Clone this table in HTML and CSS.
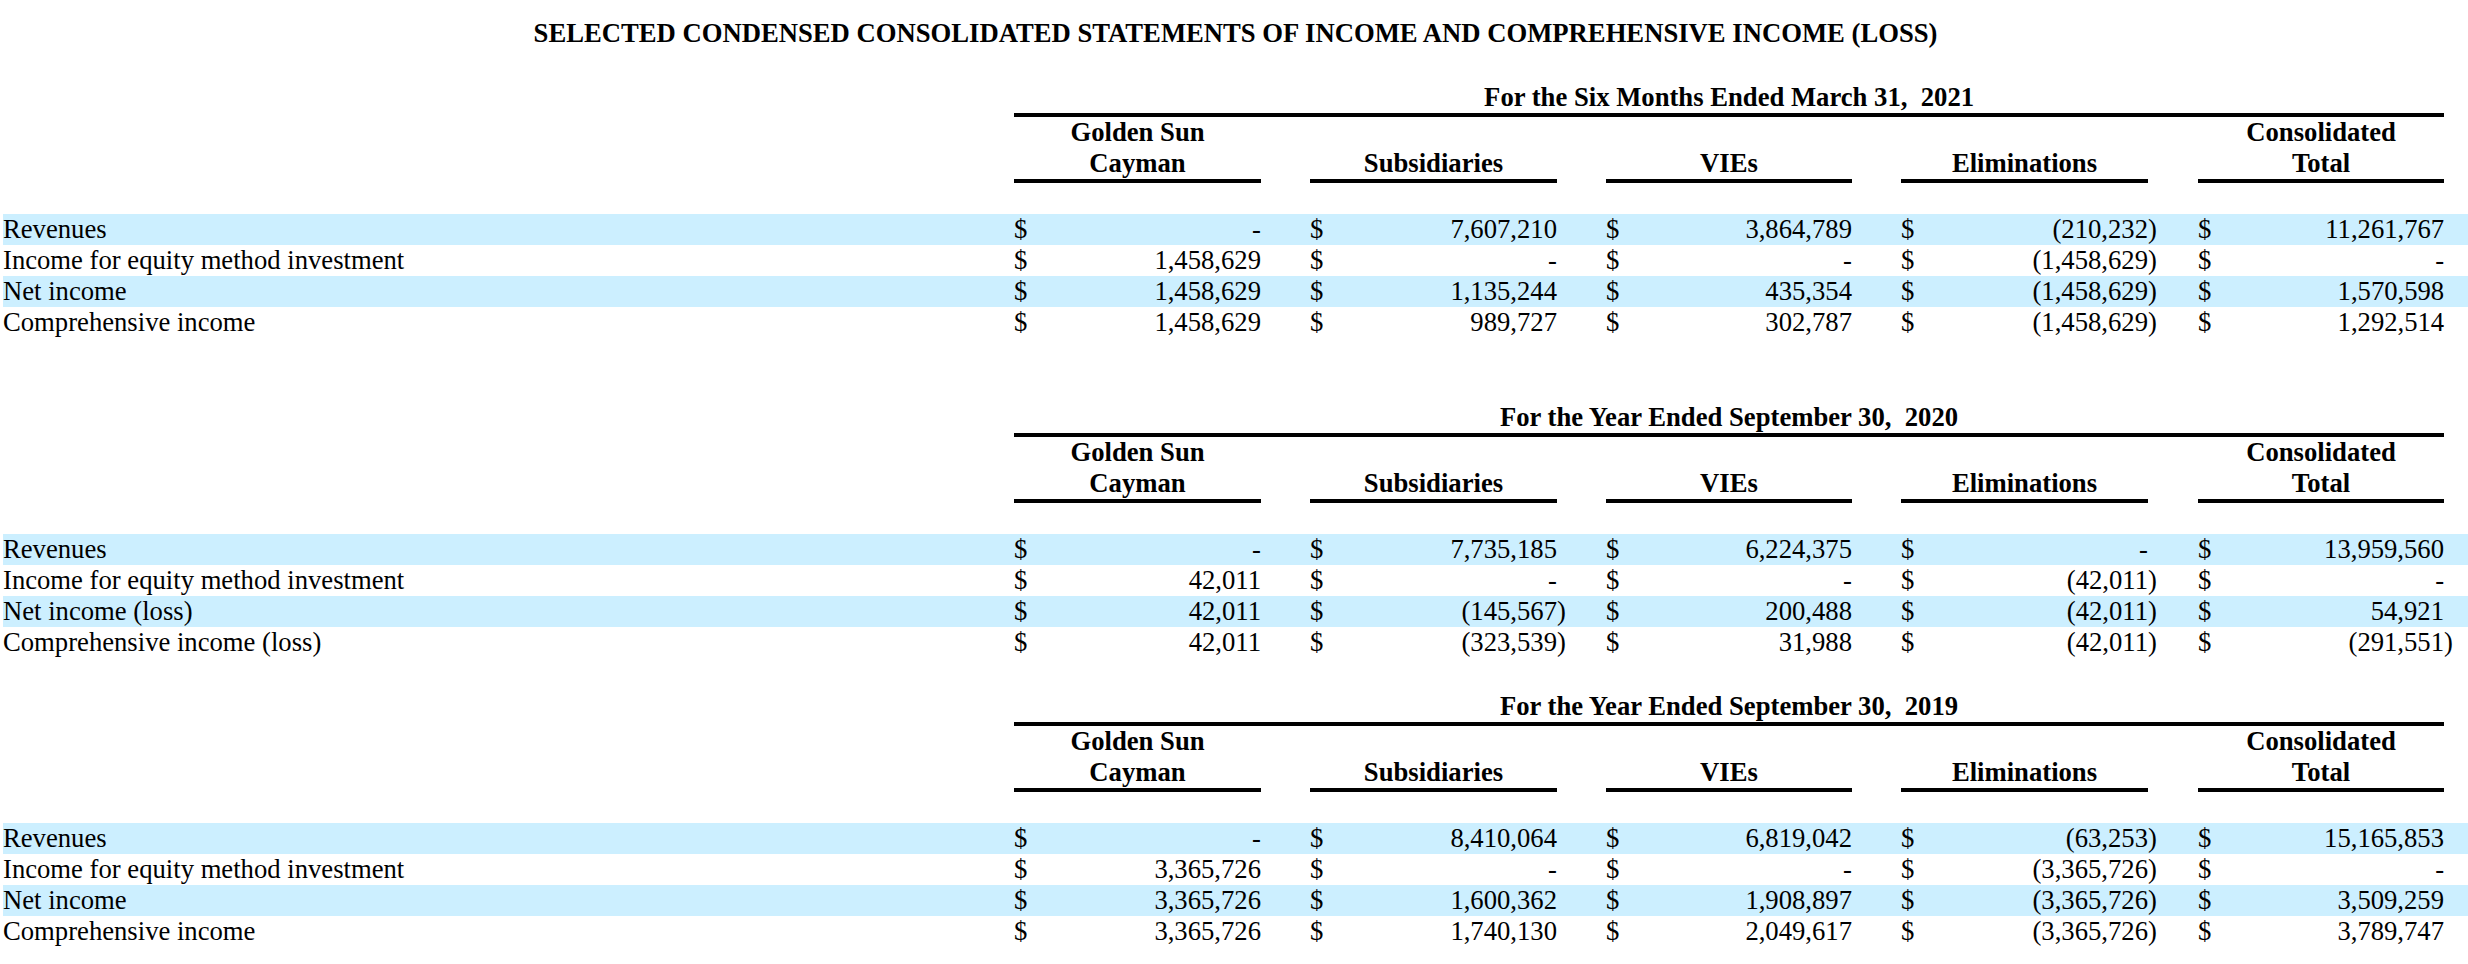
FILE: index.html
```html
<!DOCTYPE html>
<html>
<head>
<meta charset="utf-8">
<title>Selected Condensed Consolidated Statements</title>
<link rel="stylesheet" href="styles.css">
</head>
<body>
<div class="sheet">
  <div class="title">SELECTED CONDENSED CONSOLIDATED STATEMENTS OF INCOME AND COMPREHENSIVE INCOME (LOSS)</div>

  <table class="stmt first">
    <colgroup>
      <col class="c-lbl"><col class="c-cur"><col class="c-val"><col class="c-gap">
      <col class="c-cur"><col class="c-val"><col class="c-gap">
      <col class="c-cur"><col class="c-val3"><col class="c-gap">
      <col class="c-cur"><col class="c-val"><col class="c-gap4">
      <col class="c-cur"><col class="c-val3"><col class="c-tail">
    </colgroup>
    <tr class="period-row"><td></td><td class="period" colspan="14">For the Six Months Ended March 31,&nbsp; 2021</td><td></td></tr>
    <tr class="head-row"><td></td><td class="colhead" colspan="2">Golden Sun<br>Cayman</td><td></td><td class="colhead" colspan="2">Subsidiaries</td><td></td><td class="colhead" colspan="2">VIEs</td><td></td><td class="colhead" colspan="2">Eliminations</td><td></td><td class="colhead" colspan="2">Consolidated<br>Total</td><td></td></tr>
    <tr class="blank"><td colspan="16"></td></tr>
    <tr class="band"><td class="lbl">Revenues</td><td class="cur">$</td><td class="num">-</td><td class="gap"></td><td class="cur">$</td><td class="num">7,607,210</td><td class="gap"></td><td class="cur">$</td><td class="num">3,864,789</td><td class="gap"></td><td class="cur">$</td><td class="num">(210,232</td><td class="gap">)</td><td class="cur">$</td><td class="num">11,261,767</td><td class="gap"></td></tr>
    <tr><td class="lbl">Income for equity method investment</td><td class="cur">$</td><td class="num">1,458,629</td><td class="gap"></td><td class="cur">$</td><td class="num">-</td><td class="gap"></td><td class="cur">$</td><td class="num">-</td><td class="gap"></td><td class="cur">$</td><td class="num">(1,458,629</td><td class="gap">)</td><td class="cur">$</td><td class="num">-</td><td class="gap"></td></tr>
    <tr class="band"><td class="lbl">Net income</td><td class="cur">$</td><td class="num">1,458,629</td><td class="gap"></td><td class="cur">$</td><td class="num">1,135,244</td><td class="gap"></td><td class="cur">$</td><td class="num">435,354</td><td class="gap"></td><td class="cur">$</td><td class="num">(1,458,629</td><td class="gap">)</td><td class="cur">$</td><td class="num">1,570,598</td><td class="gap"></td></tr>
    <tr><td class="lbl">Comprehensive income</td><td class="cur">$</td><td class="num">1,458,629</td><td class="gap"></td><td class="cur">$</td><td class="num">989,727</td><td class="gap"></td><td class="cur">$</td><td class="num">302,787</td><td class="gap"></td><td class="cur">$</td><td class="num">(1,458,629</td><td class="gap">)</td><td class="cur">$</td><td class="num">1,292,514</td><td class="gap"></td></tr>
  </table>

  <table class="stmt second">
    <colgroup>
      <col class="c-lbl"><col class="c-cur"><col class="c-val"><col class="c-gap">
      <col class="c-cur"><col class="c-val"><col class="c-gap">
      <col class="c-cur"><col class="c-val3"><col class="c-gap">
      <col class="c-cur"><col class="c-val"><col class="c-gap4">
      <col class="c-cur"><col class="c-val3"><col class="c-tail">
    </colgroup>
    <tr class="period-row"><td></td><td class="period" colspan="14">For the Year Ended September 30,&nbsp; 2020</td><td></td></tr>
    <tr class="head-row"><td></td><td class="colhead" colspan="2">Golden Sun<br>Cayman</td><td></td><td class="colhead" colspan="2">Subsidiaries</td><td></td><td class="colhead" colspan="2">VIEs</td><td></td><td class="colhead" colspan="2">Eliminations</td><td></td><td class="colhead" colspan="2">Consolidated<br>Total</td><td></td></tr>
    <tr class="blank"><td colspan="16"></td></tr>
    <tr class="band"><td class="lbl">Revenues</td><td class="cur">$</td><td class="num">-</td><td class="gap"></td><td class="cur">$</td><td class="num">7,735,185</td><td class="gap"></td><td class="cur">$</td><td class="num">6,224,375</td><td class="gap"></td><td class="cur">$</td><td class="num">-</td><td class="gap"></td><td class="cur">$</td><td class="num">13,959,560</td><td class="gap"></td></tr>
    <tr><td class="lbl">Income for equity method investment</td><td class="cur">$</td><td class="num">42,011</td><td class="gap"></td><td class="cur">$</td><td class="num">-</td><td class="gap"></td><td class="cur">$</td><td class="num">-</td><td class="gap"></td><td class="cur">$</td><td class="num">(42,011</td><td class="gap">)</td><td class="cur">$</td><td class="num">-</td><td class="gap"></td></tr>
    <tr class="band"><td class="lbl">Net income (loss)</td><td class="cur">$</td><td class="num">42,011</td><td class="gap"></td><td class="cur">$</td><td class="num">(145,567</td><td class="gap">)</td><td class="cur">$</td><td class="num">200,488</td><td class="gap"></td><td class="cur">$</td><td class="num">(42,011</td><td class="gap">)</td><td class="cur">$</td><td class="num">54,921</td><td class="gap"></td></tr>
    <tr><td class="lbl">Comprehensive income (loss)</td><td class="cur">$</td><td class="num">42,011</td><td class="gap"></td><td class="cur">$</td><td class="num">(323,539</td><td class="gap">)</td><td class="cur">$</td><td class="num">31,988</td><td class="gap"></td><td class="cur">$</td><td class="num">(42,011</td><td class="gap">)</td><td class="cur">$</td><td class="num">(291,551</td><td class="gap">)</td></tr>
  </table>

  <table class="stmt third">
    <colgroup>
      <col class="c-lbl"><col class="c-cur"><col class="c-val"><col class="c-gap">
      <col class="c-cur"><col class="c-val"><col class="c-gap">
      <col class="c-cur"><col class="c-val3"><col class="c-gap">
      <col class="c-cur"><col class="c-val"><col class="c-gap4">
      <col class="c-cur"><col class="c-val3"><col class="c-tail">
    </colgroup>
    <tr class="period-row"><td></td><td class="period" colspan="14">For the Year Ended September 30,&nbsp; 2019</td><td></td></tr>
    <tr class="head-row"><td></td><td class="colhead" colspan="2">Golden Sun<br>Cayman</td><td></td><td class="colhead" colspan="2">Subsidiaries</td><td></td><td class="colhead" colspan="2">VIEs</td><td></td><td class="colhead" colspan="2">Eliminations</td><td></td><td class="colhead" colspan="2">Consolidated<br>Total</td><td></td></tr>
    <tr class="blank"><td colspan="16"></td></tr>
    <tr class="band"><td class="lbl">Revenues</td><td class="cur">$</td><td class="num">-</td><td class="gap"></td><td class="cur">$</td><td class="num">8,410,064</td><td class="gap"></td><td class="cur">$</td><td class="num">6,819,042</td><td class="gap"></td><td class="cur">$</td><td class="num">(63,253</td><td class="gap">)</td><td class="cur">$</td><td class="num">15,165,853</td><td class="gap"></td></tr>
    <tr><td class="lbl">Income for equity method investment</td><td class="cur">$</td><td class="num">3,365,726</td><td class="gap"></td><td class="cur">$</td><td class="num">-</td><td class="gap"></td><td class="cur">$</td><td class="num">-</td><td class="gap"></td><td class="cur">$</td><td class="num">(3,365,726</td><td class="gap">)</td><td class="cur">$</td><td class="num">-</td><td class="gap"></td></tr>
    <tr class="band"><td class="lbl">Net income</td><td class="cur">$</td><td class="num">3,365,726</td><td class="gap"></td><td class="cur">$</td><td class="num">1,600,362</td><td class="gap"></td><td class="cur">$</td><td class="num">1,908,897</td><td class="gap"></td><td class="cur">$</td><td class="num">(3,365,726</td><td class="gap">)</td><td class="cur">$</td><td class="num">3,509,259</td><td class="gap"></td></tr>
    <tr><td class="lbl">Comprehensive income</td><td class="cur">$</td><td class="num">3,365,726</td><td class="gap"></td><td class="cur">$</td><td class="num">1,740,130</td><td class="gap"></td><td class="cur">$</td><td class="num">2,049,617</td><td class="gap"></td><td class="cur">$</td><td class="num">(3,365,726</td><td class="gap">)</td><td class="cur">$</td><td class="num">3,789,747</td><td class="gap"></td></tr>
  </table>
</div>
</body>
</html>
```

FILE: styles.css
```css
html, body {
  margin: 0;
  padding: 0;
  background: #ffffff;
}

html {
  height: 964px;
  overflow: hidden;
}

body {
  font-family: "Liberation Serif", "Times New Roman", serif;
  font-size: 26.67px;
  line-height: 31px;
  color: #000000;
  height: 964px;
  overflow: hidden;
}

.sheet {
  width: 2465px;
  margin-left: 3px;
  padding-top: 18px;
}

.title {
  font-weight: bold;
  text-align: center;
  height: 31px;
  white-space: nowrap;
}

.stmt {
  width: 2465px;
  table-layout: fixed;
  border-collapse: separate;
  border-spacing: 0;
  font-size: 26.67px;
  line-height: 31px;
}

.stmt.first { margin-top: 33px; }
.stmt.second { margin-top: 64px; }
.stmt.third { margin-top: 33px; }

.stmt td {
  padding: 0;
  height: 31px;
  white-space: nowrap;
  vertical-align: bottom;
}

.c-lbl { width: 1011px; }
.c-cur { width: 20px; }
.c-val { width: 227px; }
.c-val3 { width: 226px; }
.c-gap { width: 49px; }
.c-gap4 { width: 50px; }
.c-tail { width: 24px; }

.period {
  font-weight: bold;
  text-align: center;
  border-bottom: 4px solid #000000;
}

.colhead {
  font-weight: bold;
  text-align: center;
  border-bottom: 4px solid #000000;
}

.band td {
  background: #ccefff;
}

.lbl {
  text-align: left;
}

.cur {
  text-align: left;
}

.num {
  text-align: right;
}

.gap {
  text-align: left;
}
```
